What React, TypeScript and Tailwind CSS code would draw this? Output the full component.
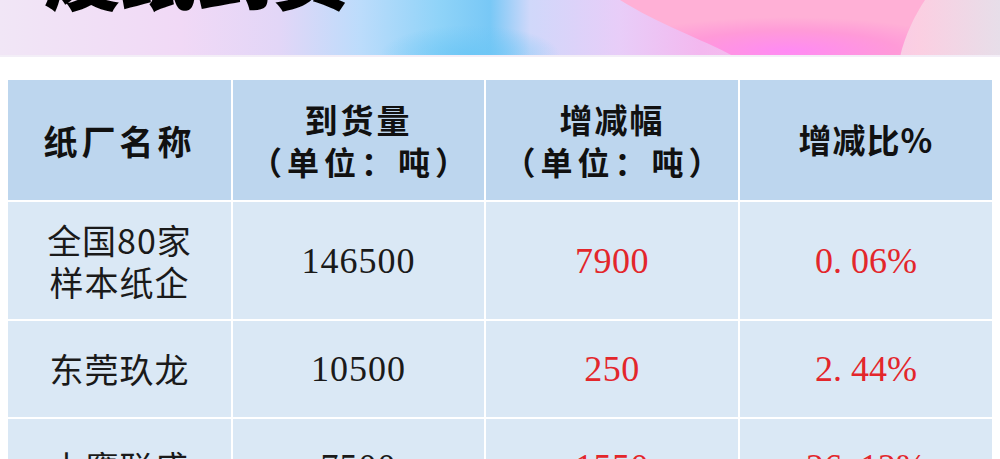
import React from "react";

const cjk = { fontFamily: '"Noto Sans CJK SC", "Noto Sans", sans-serif' };
const num = { fontFamily: '"Liberation Serif", "Noto Sans CJK SC", serif' };

function Banner() {
  return (
    <div className="relative h-[57px] w-full overflow-hidden">
      <svg className="absolute inset-0 h-full w-full" viewBox="0 0 1000 57" preserveAspectRatio="none">
        <defs>
          <linearGradient id="base" x1="0" y1="0" x2="1" y2="0">
            <stop offset="0" stopColor="#f1e6f6" />
            <stop offset="0.18" stopColor="#f1d9f6" />
            <stop offset="0.28" stopColor="#e2d6f7" />
            <stop offset="0.36" stopColor="#bcdcfb" />
            <stop offset="0.44" stopColor="#8fd3f8" />
            <stop offset="0.49" stopColor="#78c8f6" />
            <stop offset="0.53" stopColor="#d0d8fa" />
            <stop offset="0.62" stopColor="#e8cdf8" />
            <stop offset="0.7" stopColor="#f3b8ef" />
            <stop offset="0.85" stopColor="#f7c6ec" />
            <stop offset="0.92" stopColor="#fbcfe2" />
            <stop offset="1" stopColor="#e7dee9" />
          </linearGradient>
          <radialGradient id="pink" cx="0.55" cy="0.9" r="0.6">
            <stop offset="0" stopColor="#ff8af4" />
            <stop offset="0.6" stopColor="#ff9ad8" />
            <stop offset="1" stopColor="#ffb0d6" />
          </radialGradient>
          <radialGradient id="blue" cx="0.5" cy="0.5" r="0.5">
            <stop offset="0" stopColor="#6cc6f5" stopOpacity="0.9" />
            <stop offset="1" stopColor="#6cc6f5" stopOpacity="0" />
          </radialGradient>
        </defs>
        <rect x="0" y="0" width="1000" height="57" fill="url(#base)" />
        <ellipse cx="470" cy="55" rx="90" ry="30" fill="url(#blue)" />
        <path d="M620 0 C 660 25, 700 38, 735 57 L 900 57 C 905 35, 915 15, 925 0 Z" fill="url(#pink)" />
        <rect x="0" y="55" width="1000" height="2" fill="#f3eef7" />
      </svg>
      <div
        className="relative ml-[44px] mt-[-67px] text-[76px] font-black leading-none text-black"
        style={cjk}
      >
        废纸到货
      </div>
    </div>
  );
}

function Cell({
  children,
  head = false,
  className = "",
}: {
  children: React.ReactNode;
  head?: boolean;
  className?: string;
}) {
  return (
    <div
      className={`flex flex-col items-center justify-center text-center ${
        head ? "bg-[#bdd6ee]" : "bg-[#dae8f5]"
      } ${className}`}
    >
      {children}
    </div>
  );
}

export default function App() {
  const rows = [
    { name: ["全国80家", "样本纸企"], a: "146500", b: "7900", c: "0. 06%", h: "h-[117px]" },
    { name: ["东莞玖龙"], a: "10500", b: "250", c: "2. 44%", h: "h-[96px]" },
    { name: ["山鹰联盛"], a: "7500", b: "1550", c: "26. 12%", h: "h-[96px]" },
  ];
  return (
    <div className="h-[459px] w-[1000px] overflow-hidden bg-white">
      <Banner />
      <div className="mt-[23px] pl-[8px]">
        <div className="grid w-[987px] grid-cols-[223px_251px_252px_252px] gap-[2px] bg-white">
          <Cell head className="h-[120px]">
            <div className="text-[34px] font-bold tracking-[4px] text-[#111]" style={cjk}>
              纸厂名称
            </div>
          </Cell>
          <Cell head className="h-[120px]">
            <div className="text-[33px] font-bold leading-[42px] tracking-[3px] text-[#111]" style={cjk}>
              到货量
            </div>
            <div className="pl-[5px] text-[32px] font-bold leading-[42px] tracking-[5px] text-[#111]" style={cjk}>
              （单位：吨）
            </div>
          </Cell>
          <Cell head className="h-[120px]">
            <div className="text-[33px] font-bold leading-[42px] tracking-[2px] text-[#111]" style={cjk}>
              增减幅
            </div>
            <div className="pl-[5px] text-[32px] font-bold leading-[42px] tracking-[5px] text-[#111]" style={cjk}>
              （单位：吨）
            </div>
          </Cell>
          <Cell head className="h-[120px]">
            <div className="text-[33px] font-bold tracking-[1px] text-[#111]" style={cjk}>
              增减比%
            </div>
          </Cell>
          {rows.map((r, i) => (
            <React.Fragment key={i}>
              <Cell className={r.h}>
                {r.name.map((n, j) => (
                  <div key={j} className="text-[34px] leading-[42px] tracking-[1px] text-[#1a1a1a]" style={cjk}>
                    {n}
                  </div>
                ))}
              </Cell>
              <Cell className={r.h}>
                <div className="text-[36px] leading-none tracking-[1px] text-[#1a1a1a]" style={num}>
                  {r.a}
                </div>
              </Cell>
              <Cell className={r.h}>
                <div className="text-[36px] leading-none tracking-[0.5px] text-[#e3262b]" style={num}>
                  {r.b}
                </div>
              </Cell>
              <Cell className={r.h}>
                <div className="whitespace-pre text-[36px] leading-none text-[#e3262b]" style={num}>
                  {r.c}
                </div>
              </Cell>
            </React.Fragment>
          ))}
        </div>
      </div>
    </div>
  );
}
